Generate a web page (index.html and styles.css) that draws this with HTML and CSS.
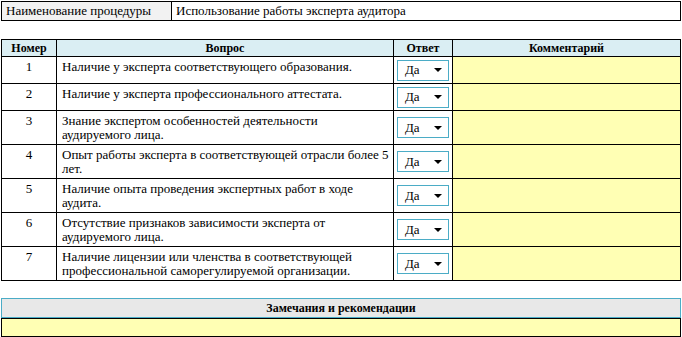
FILE: index.html
```html
<!DOCTYPE html>
<html lang="ru">
<head>
  <meta charset="UTF-8" />
  <title>Использование работы эксперта аудитора</title>
  <link rel="stylesheet" href="styles.css">
</head>
<body>
  <div class="sheet">
    <!-- Procedure name -->
    <div class="proc">
      <div class="proc-label">Наименование процедуры</div>
      <div class="proc-value">Использование работы эксперта аудитора</div>
    </div>

    <!-- Questions -->
    <table class="checklist">
      <colgroup>
        <col class="c-num">
        <col class="c-question">
        <col class="c-answer">
        <col class="c-comment">
      </colgroup>
      <thead>
        <tr>
          <th>Номер</th>
          <th>Вопрос</th>
          <th>Ответ</th>
          <th>Комментарий</th>
        </tr>
      </thead>
      <tbody>
        <tr class="short">
          <td class="num">1</td>
          <td class="question">Наличие у эксперта соответствующего образования.</td>
          <td class="answer"><div class="dropdown">Да<span class="caret"></span></div></td>
          <td class="comment"></td>
        </tr>
        <tr class="short">
          <td class="num">2</td>
          <td class="question">Наличие у эксперта профессионального аттестата.</td>
          <td class="answer"><div class="dropdown">Да<span class="caret"></span></div></td>
          <td class="comment"></td>
        </tr>
        <tr>
          <td class="num">3</td>
          <td class="question">Знание экспертом особенностей деятельности аудируемого лица.</td>
          <td class="answer"><div class="dropdown">Да<span class="caret"></span></div></td>
          <td class="comment"></td>
        </tr>
        <tr>
          <td class="num">4</td>
          <td class="question">Опыт работы эксперта в соответствующей отрасли более 5 лет.</td>
          <td class="answer"><div class="dropdown">Да<span class="caret"></span></div></td>
          <td class="comment"></td>
        </tr>
        <tr>
          <td class="num">5</td>
          <td class="question">Наличие опыта проведения экспертных работ в ходе аудита.</td>
          <td class="answer"><div class="dropdown">Да<span class="caret"></span></div></td>
          <td class="comment"></td>
        </tr>
        <tr>
          <td class="num">6</td>
          <td class="question">Отсутствие признаков зависимости эксперта от аудируемого лица.</td>
          <td class="answer"><div class="dropdown">Да<span class="caret"></span></div></td>
          <td class="comment"></td>
        </tr>
        <tr>
          <td class="num">7</td>
          <td class="question">Наличие лицензии или членства в соответствующей профессиональной саморегулируемой организации.</td>
          <td class="answer"><div class="dropdown">Да<span class="caret"></span></div></td>
          <td class="comment"></td>
        </tr>
      </tbody>
    </table>

    <!-- Notes -->
    <div class="notes">
      <div class="notes-head">Замечания и рекомендации</div>
      <div class="notes-body"></div>
    </div>
  </div>
</body>
</html>
```

FILE: styles.css
```css
html, body {
  margin: 0;
  padding: 0;
  background: #FFFFFF;
  color: #000000;
  font-family: "Liberation Serif", "Times New Roman", serif;
  font-size: 13px;
}
.sheet {
  width: 680px;
  padding: 1px 0 0 1px;
}

/* Procedure name */
.proc {
  display: flex;
  height: 18px;
  border: 1px solid #000000;
  line-height: 18px;
}
.proc-label {
  width: 165px;
  padding-left: 4px;
  background: #F2F2F2;
  border-right: 1px solid #000000;
}
.proc-value {
  flex: 1;
  padding-left: 4px;
}

/* Questions table */
.checklist {
  width: 680px;
  margin-top: 18px;
  border-collapse: collapse;
  table-layout: fixed;
}
.c-num { width: 55px; }
.c-question { width: 337px; }
.c-answer { width: 59px; }
.c-comment { width: auto; }
.checklist th,
.checklist td {
  border: 1px solid #000000;
  padding: 0;
}
.checklist th {
  height: 16px;
  background: #DAEEF3;
  font-size: 12px;
  font-weight: 700;
  text-align: center;
}
.checklist tbody tr {
  height: 34px;
}
.checklist tbody tr.short {
  height: 27px;
}
.num {
  text-align: center;
  vertical-align: top;
  padding-top: 3px !important;
  line-height: 14px;
}
.question {
  vertical-align: top;
  padding: 3px 4px 0 5px !important;
  line-height: 14px;
}
.answer {
  vertical-align: middle;
  background: #FFFFFF;
}
.comment {
  background: #FFFFB4;
}

/* Yes/No picker */
.dropdown {
  display: flex;
  align-items: center;
  width: 52px;
  height: 21px;
  margin: 0 auto;
  padding-left: 7px;
  box-sizing: border-box;
  border: 1px solid #4BACC6;
  background: #FFFFFF;
}
.caret {
  width: 0;
  height: 0;
  margin-left: 14px;
  border-left: 4px solid transparent;
  border-right: 4px solid transparent;
  border-top: 4px solid #000000;
}

/* Notes block */
.notes {
  margin-top: 17px;
}
.notes-head {
  height: 18px;
  line-height: 18px;
  border: 1px solid #4BACC6;
  background: #E8E8E8;
  font-size: 12px;
  font-weight: 700;
  text-align: center;
}
.notes-body {
  height: 17px;
  border: 1px solid #000000;
  background: #FFFFB4;
}
```
